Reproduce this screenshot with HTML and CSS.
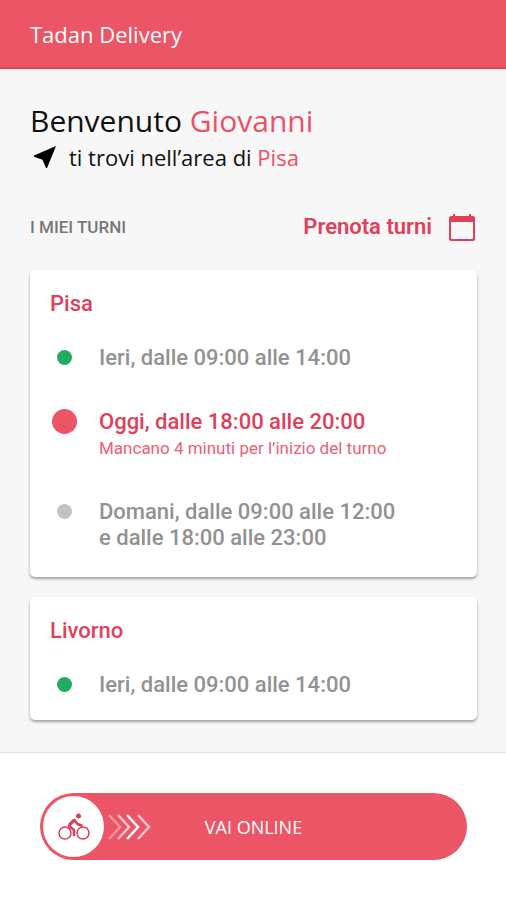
FILE: index.html
```html
<!DOCTYPE html>
<html lang="it">
<head>
<meta charset="utf-8">
<meta name="viewport" content="width=device-width, initial-scale=1">
<title>Tadan Delivery</title>
<link rel="stylesheet" href="styles.css">
</head>
<body>
<header class="topbar">Tadan Delivery</header>
<main class="content">
  <h1 class="welcome">Benvenuto <span class="accent">Giovanni</span></h1>
  <p class="area">
    <svg class="area-icon" viewBox="0 0 24 24" aria-hidden="true"><path d="M23 1 1 10.500v1.200l8.500 3L13 23h1z"/></svg>
    <span>ti trovi nell’area di <span class="accent">Pisa</span></span>
  </p>
  <div class="shifts-head">
    <h2 class="shifts-title">I MIEI TURNI</h2>
    <a class="book" href="#prenota">Prenota turni
      <svg class="book-icon" viewBox="0 0 26 29" aria-hidden="true"><path fill-rule="evenodd" d="M4 1h2v2h14V1h2v2h2q2 0 2 2v21q0 2-2 2H2q-2 0-2-2V5q0-2 2-2h2zM2 9v16q0 1 1 1h20q1 0 1-1V9z"/></svg>
    </a>
  </div>
  <section class="card">
    <h3 class="city">Pisa</h3>
    <ul class="shifts">
      <li class="shift"><span class="dot done"></span><p class="time">Ieri, dalle 09:00 alle 14:00</p></li>
      <li class="shift today"><span class="dot current"></span><div><p class="time">Oggi, dalle 18:00 alle 20:00</p><p class="note">Mancano 4 minuti per l’inizio del turno</p></div></li>
      <li class="shift"><span class="dot"></span><p class="time">Domani, dalle 09:00 alle 12:00<br>e dalle 18:00 alle 23:00</p></li>
    </ul>
  </section>
  <section class="card">
    <h3 class="city">Livorno</h3>
    <ul class="shifts">
      <li class="shift"><span class="dot done"></span><p class="time">Ieri, dalle 09:00 alle 14:00</p></li>
    </ul>
  </section>
</main>
<footer class="bottom">
  <button class="online" type="button">
    <span class="knob">
      <svg class="bike" viewBox="0 0 32 28" fill="none" stroke="currentColor" stroke-width="1.500" aria-hidden="true">
        <circle cx="7" cy="20" r="6"/><circle cx="25" cy="20" r="6"/>
        <circle cx="20.500" cy="3" r="2.500" fill="currentColor" stroke="none"/>
        <path stroke-width="2.500" stroke-linejoin="round" d="M16 23v-6l-5-4 5.500-6 3 4 5 2"/>
        <path stroke-width="3" d="m11 12 5-5"/>
      </svg>
    </span>
    <svg class="arrows" viewBox="0 0 44 28" fill="none" stroke="currentColor" stroke-width="2.500" aria-hidden="true">
      <path opacity=".35" d="m2 2 11 12L2 26"/><path opacity=".65" d="m11 2 11 12-11 12"/><path d="m20 2 11 12-11 12"/><path opacity=".65" d="m31 2 11 12-11 12"/>
    </svg>
    <span class="online-label">VAI ONLINE</span>
  </button>
</footer>
</body>
</html>
```
FILE: styles.css
```css
* {
  box-sizing: border-box;
  margin: 0;
  padding: 0;
}

body {
  min-height: 100vh;
  display: flex;
  flex-direction: column;
  background: #f7f7f7;
  color: #111;
  font-family: Roboto, sans-serif;
}

.topbar {
  padding: 20px 30px 19px;
  border-bottom: 2px solid #e0475c;
  background: #ec5566;
  color: #fff;
  font: 22px/28px "Open Sans", sans-serif;
}

.content {
  flex: 1;
  padding: 32px 29px 30px 30px;
}

.accent {
  color: #ec5068;
}

.welcome {
  font: 30px/40px "Open Sans", sans-serif;
}

.area {
  display: flex;
  align-items: center;
  gap: 12px;
  padding-left: 3px;
  font: 22px/32px "Open Sans", sans-serif;
}

.area-icon {
  width: 24px;
  height: 24px;
}

.shifts-head {
  display: flex;
  align-items: center;
  justify-content: space-between;
  margin: 38px 0 27px;
  padding-right: 2px;
}

.shifts-title {
  color: #777;
  font-size: 17px;
  line-height: 32px;
  font-weight: 500;
}

.book {
  display: flex;
  align-items: center;
  gap: 17px;
  color: #e0405a;
  font-size: 22px;
  line-height: 32px;
  font-weight: 600;
  text-decoration: none;
}

.book-icon {
  width: 26px;
  height: 29px;
  fill: currentColor;
}

.card {
  padding: 20px 20px 26px;
  border-radius: 5px;
  background: #fff;
  box-shadow: 0 2px 3px rgba(0, 0, 0, .35);
}

.card + .card {
  margin-top: 20px;
  padding-bottom: 22px;
}

.city {
  margin-bottom: 27px;
  color: #e0405a;
  font-size: 22px;
  line-height: 28px;
  font-weight: 500;
}

.shifts {
  display: grid;
  gap: 38px;
  list-style: none;
}

.shift {
  display: grid;
  grid-template-columns: 29px 1fr;
  column-gap: 20px;
  color: #929292;
}

.time {
  font-size: 22px;
  line-height: 26px;
  font-weight: 500;
}

.today {
  color: #e0405a;
}

.note {
  color: #ec6075;
  font-size: 17px;
  line-height: 26px;
}

.dot {
  width: 15px;
  height: 15px;
  margin-top: 5px;
  justify-self: center;
  border-radius: 50%;
  background: #c2c2c2;
}

.done {
  background: #20ad60;
}

.current {
  width: 25px;
  height: 25px;
  margin-top: 0;
  background: #ec5566;
}

.bottom {
  padding: 40px 39px 40px 40px;
  border-top: 1px solid #dedede;
  background: #fff;
}

.online {
  display: grid;
  grid-template-columns: 61px 44px 1fr 105px;
  align-items: center;
  width: 100%;
  padding: 3px;
  border: 0;
  border-radius: 34px;
  background: #ec5566;
  color: #fff;
  font: 18px/24px "Open Sans", sans-serif;
}

.knob {
  display: grid;
  place-items: center;
  width: 61px;
  height: 61px;
  border-radius: 50%;
  background: #fff;
  color: #dd3d58;
}

.bike {
  width: 32px;
  height: 28px;
}

.arrows {
  width: 44px;
  height: 28px;
  margin-left: 3px;
}
```
